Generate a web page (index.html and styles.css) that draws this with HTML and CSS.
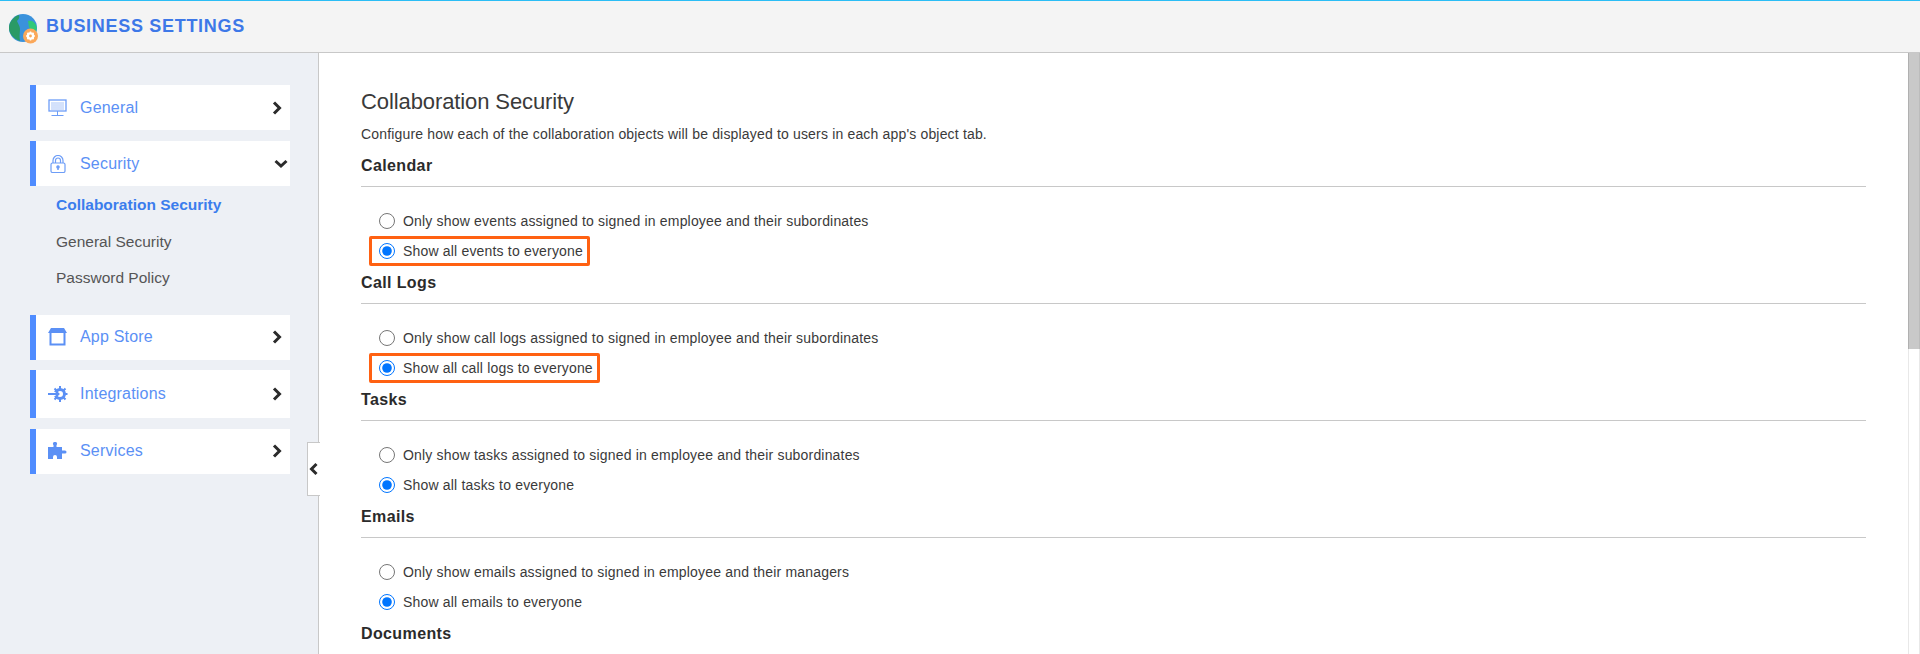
FILE: index.html
```html
<!DOCTYPE html>
<html lang="en">
<head>
<meta charset="utf-8">
<title>Business Settings</title>
<link rel="stylesheet" href="styles.css">
</head>
<body>
<header class="topbar">
  <svg class="logo" width="30" height="30" viewBox="0 0 30 30">
    <circle cx="14" cy="14" r="14" fill="#3a92dc"/>
    <path d="M1 9c2-4 5-7 9-8 1 3-1 5-2 6 1 3 3 5 3 8 0 4-1 7 0 12C5 25 0 20 0 14c0-2 .4-3.500 1-5z" fill="#2a9a66"/>
    <path d="M19 7c3-1 6 0 8 4 1 3 1 4 0 6-3 0-6-1-7-4z" fill="#30c878"/>
    <circle cx="21.500" cy="22" r="7.500" fill="#fba85a"/>
    <circle cx="21.500" cy="22" r="2.600" fill="none" stroke="#fff" stroke-width="2.400"/>
    <path d="M21.500 17.600v1.500M21.500 24.900v1.500M17.100 22h1.500M24.400 22h1.500M18.400 18.900l1 1M23.600 24.100l1 1M18.400 25.100l1-1M23.600 19.900l1-1" stroke="#fff" stroke-width="1.500"/>
  </svg>
  <span class="brand">BUSINESS SETTINGS</span>
</header>
<div class="layout">
  <aside class="sidebar">
    <nav class="menu">
      <a class="menu-item">
        <svg class="icon" width="20" height="18" viewBox="0 0 20 18" fill="none">
          <rect x="1" y="1" width="17" height="11" stroke="#6d9df7" stroke-width="1.300"/>
          <path d="M3 4h13M3 6h13M3 8h13M3 10h13" stroke="#a9c4f8" stroke-width="1"/>
          <path d="M9.500 12v4M3.500 16.500h12" stroke="#6d9df7" stroke-width="1"/>
        </svg>
        <span class="label">General</span>
        <svg class="chev" width="12" height="14" viewBox="0 0 12 14"><path d="M3 1.500l5.500 5.500L3 12.500"/></svg>
      </a>
      <a class="menu-item">
        <svg class="icon" width="20" height="18" viewBox="0 0 20 18" fill="none" stroke="#6d9df7" stroke-width="1.200">
          <rect x="3" y="8" width="14" height="9.500" rx="1.500"/>
          <path d="M5 8V5.500a5 5 0 0 1 10 0V8M7.500 8V5.500a2.500 2.500 0 0 1 5 0V8"/>
          <circle cx="10" cy="12" r="1.200" fill="#6d9df7"/><path d="M10 12.500V15" stroke-width="1.500"/>
        </svg>
        <span class="label">Security</span>
        <svg class="chev chev-down" width="14" height="12" viewBox="0 0 14 12"><path d="M1.500 3l5.500 5 5.500-5"/></svg>
      </a>
      <ul class="submenu">
        <li class="sub active">Collaboration Security</li>
        <li class="sub">General Security</li>
        <li class="sub">Password Policy</li>
      </ul>
      <a class="menu-item store">
        <svg class="icon" width="20" height="18" viewBox="0 0 20 18">
          <path d="M3 0h13l3 5H0z" fill="#5b90f5"/>
          <path d="M2.500 5v11.500h14V5" fill="none" stroke="#5b90f5" stroke-width="2"/>
        </svg>
        <span class="label">App Store</span>
        <svg class="chev" width="12" height="14" viewBox="0 0 12 14"><path d="M3 1.500l5.500 5.500L3 12.500"/></svg>
      </a>
      <a class="menu-item tall">
        <svg class="icon" width="20" height="18" viewBox="0 0 20 18">
          <circle cx="12" cy="9" r="4.500" fill="none" stroke="#5b90f5" stroke-width="3"/>
          <path d="M12 1v3M12 14v3M19.500 9h-3M6.500 3.500l2 2M17.500 3.500l-2 2M6.500 14.500l2-2M17.500 14.500l-2-2" stroke="#5b90f5" stroke-width="2"/>
          <path d="M0 9h10" stroke="#fff" stroke-width="4"/>
          <path d="M0 9h10M7 5.500l3.500 3.500L7 12.500" fill="none" stroke="#5b90f5" stroke-width="2"/>
        </svg>
        <span class="label">Integrations</span>
        <svg class="chev" width="12" height="14" viewBox="0 0 12 14"><path d="M3 1.500l5.500 5.500L3 12.500"/></svg>
      </a>
      <a class="menu-item">
        <svg class="icon" width="20" height="18" viewBox="0 0 20 18">
          <path d="M0 5h5.500V3a2 2 0 1 1 3 0v2H14v3.500h3a1.500 1.500 0 1 1 0 3h-3V17H9v-2a2 2 0 0 0-4 0v2H0z" fill="#5b90f5"/>
        </svg>
        <span class="label">Services</span>
        <svg class="chev" width="12" height="14" viewBox="0 0 12 14"><path d="M3 1.500l5.500 5.500L3 12.500"/></svg>
      </a>
    </nav>
    <button class="collapse" type="button" aria-label="Collapse">
      <svg class="chev" width="10" height="14" viewBox="0 0 10 14"><path d="M7.500 2l-5 5 5 5"/></svg>
    </button>
  </aside>
  <main class="content">
    <h1 class="title">Collaboration Security</h1>
    <p class="intro">Configure how each of the collaboration objects will be displayed to users in each app's object tab.</p>
    <section class="group">
      <h2 class="group-title">Calendar</h2>
      <label class="option"><input type="radio" name="cal"><span>Only show events assigned to signed in employee and their subordinates</span></label>
      <label class="option marked"><input type="radio" name="cal" checked><span>Show all events to everyone</span></label>
    </section>
    <section class="group">
      <h2 class="group-title">Call Logs</h2>
      <label class="option"><input type="radio" name="log"><span>Only show call logs assigned to signed in employee and their subordinates</span></label>
      <label class="option marked"><input type="radio" name="log" checked><span>Show all call logs to everyone</span></label>
    </section>
    <section class="group">
      <h2 class="group-title">Tasks</h2>
      <label class="option"><input type="radio" name="task"><span>Only show tasks assigned to signed in employee and their subordinates</span></label>
      <label class="option"><input type="radio" name="task" checked><span>Show all tasks to everyone</span></label>
    </section>
    <section class="group">
      <h2 class="group-title">Emails</h2>
      <label class="option"><input type="radio" name="mail"><span>Only show emails assigned to signed in employee and their managers</span></label>
      <label class="option"><input type="radio" name="mail" checked><span>Show all emails to everyone</span></label>
    </section>
    <section class="group">
      <h2 class="group-title">Documents</h2>
    </section>
  </main>
  <div class="scrollbar"><div class="thumb"></div></div>
</div>
</body>
</html>
```

FILE: styles.css
```css
* { box-sizing: border-box; }
html, body { margin: 0; height: 100%; overflow: hidden; }
body { font-family: "Liberation Sans", Arial, sans-serif; color: #333; background: #fff; }

.topbar {
  height: 53px;
  display: flex;
  align-items: center;
  gap: 7px;
  padding: 0 0 0 9px;
  background: #f4f4f4;
  border-top: 1px solid #2bbdf5;
  border-bottom: 1px solid #c8c8c8;
}
.logo { flex: none; margin-top: 5px; }
.brand { font-size: 18px; font-weight: 700; letter-spacing: .7px; color: #3d78e8; }

.layout { display: flex; height: 601px; }

.sidebar {
  position: relative;
  flex: none;
  width: 319px;
  padding: 32px 28px 0 30px;
  background: #edf0f5;
  border-right: 1px solid #c8c8c8;
}
.menu { display: flex; flex-direction: column; gap: 11px; }
.menu-item {
  height: 45px;
  display: flex;
  align-items: center;
  padding-left: 12px;
  padding-right: 7px;
  background: #fff;
  border-left: 6px solid #4f8cff;
}
.menu-item.tall { height: 48px; }
.menu-item.store { margin-bottom: -1px; }
.icon { flex: none; }
.label { flex: 1; margin-left: 12px; font-size: 16px; letter-spacing: .2px; color: #5b90f5; }
.chev { flex: none; fill: none; stroke: #2b2b2b; stroke-width: 3; }
.chev-down { margin-right: -5px; }

.submenu { list-style: none; margin: -10px 0 7px; padding: 0 0 0 26px; }
.sub { height: 36.500px; line-height: 36px; font-size: 15.500px; color: #555; }
.sub.active { font-weight: 700; color: #3b7ded; }

.collapse {
  position: absolute;
  top: 389px;
  right: -2px;
  width: 13px;
  height: 54px;
  padding: 0;
  display: flex;
  align-items: center;
  justify-content: center;
  background: #fff;
  border: 1px solid #c8c8c8;
  border-right: 0;
}

.content { flex: 1; min-width: 0; overflow: hidden; padding: 36px 42px 0; }
.title { margin: 0; font-size: 22px; font-weight: 400; line-height: 26px; letter-spacing: -.1px; color: #3a3a3a; }
.intro { margin: 10px 0 0; font-size: 14px; line-height: 18px; letter-spacing: .17px; color: #3a3a3a; }
.group { height: 117px; }
.group-title {
  margin: 13px 0 19px;
  padding-bottom: 10px;
  font-size: 16px;
  line-height: 20px;
  font-weight: 700;
  letter-spacing: .38px;
  color: #2b2b2b;
  border-bottom: 1px solid #c8c8c8;
}
.group + .group .group-title { margin-top: 0; }
.option {
  width: fit-content;
  height: 30px;
  display: flex;
  align-items: center;
  gap: 8px;
  padding: 0 7px 0 10px;
  margin-left: 8px;
  font-size: 14px;
  letter-spacing: .18px;
  color: #3a3a3a;
}
.option input { width: 16px; height: 16px; margin: 0; flex: none; }
.marked { outline: 3px solid #ff6112; outline-offset: -3px; border-radius: 2px; }

.scrollbar { flex: none; width: 12px; background: #fff; border-left: 1px solid #e8e8e8; border-right: 1px solid #e8e8e8; }
.thumb { height: 296px; background: #c9c9c9; margin: 0 -1px; border-left: 1px solid #b0b0b0; border-right: 1px solid #bcbcbc; }
```
